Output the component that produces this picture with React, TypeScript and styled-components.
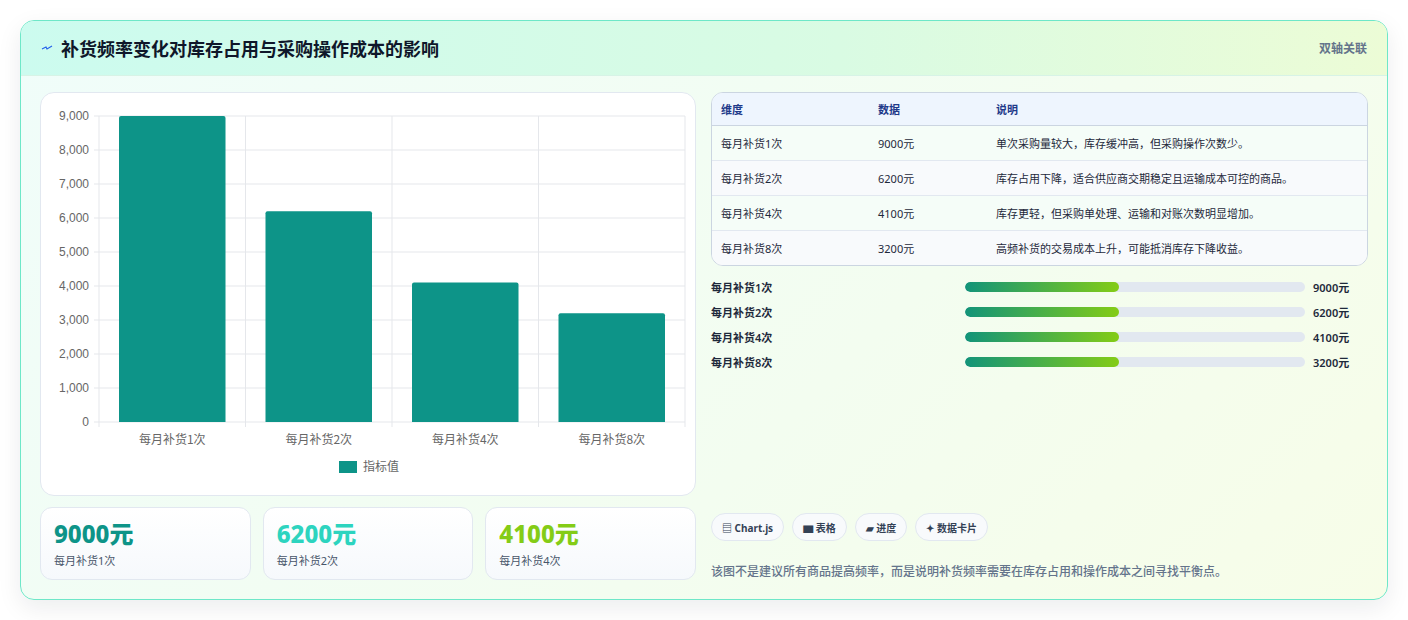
import React from "react";
import styled, { createGlobalStyle } from "styled-components";

const Global = createGlobalStyle`
  html, body { margin: 0; padding: 0; background: #fff; }
  body { font-family: "Noto Sans", "Noto Sans CJK SC", sans-serif; }
`;

const Page = styled.div`
  padding: 20px 20px 20px 20px;
  height: 620px;
  box-sizing: border-box;
`;

const Card = styled.div`
  width: 1368px;
  height: 580px;
  box-sizing: border-box;
  border: 1px solid #6ee7c8;
  border-radius: 14px;
  background: linear-gradient(135deg, #f0fdfa 0%, #f3fdf0 60%, #f7fde8 100%);
  box-shadow: 0 8px 24px rgba(15, 23, 42, 0.08);
  overflow: hidden;
  display: flex;
  flex-direction: column;
`;

const Header = styled.div`
  height: 55px;
  display: flex;
  align-items: center;
  justify-content: space-between;
  padding: 0 20px;
  background: linear-gradient(90deg, #ccfbef 0%, #d9fbe3 60%, #ecfcd6 100%);
  border-bottom: 1px solid #d7f3e6;
`;

const Title = styled.h1`
  margin: 0;
  font-size: 18px;
  font-weight: 700;
  color: #0f172a;
  display: flex;
  align-items: center;
  gap: 8px;
`;

const HeaderTag = styled.span`
  font-size: 12px;
  color: #64748b;
  font-weight: 600;
`;

const Body = styled.div`
  flex: 1;
  display: grid;
  grid-template-columns: 656px 657px;
  gap: 15px;
  padding: 16px 19px 19px 19px;
`;

const Col = styled.div`
  display: flex;
  flex-direction: column;
  gap: 11px;
`;

const Panel = styled.div`
  background: #fff;
  border: 1px solid #e2e8f0;
  border-radius: 14px;
  height: 404px;
  box-sizing: border-box;
`;

const Stats = styled.div`
  display: grid;
  grid-template-columns: repeat(3, 1fr);
  gap: 12px;
`;

const Stat = styled.div`
  height: 73px;
  box-sizing: border-box;
  border: 1px solid #e2e8f0;
  border-radius: 12px;
  background: linear-gradient(180deg, #ffffff, #f6f9fc);
  padding: 11px 13px;
`;

const StatValue = styled.div<{ $c: string }>`
  font-size: 24px;
  font-weight: 800;
  color: ${(p) => p.$c};
  line-height: 30px;
`;

const StatLabel = styled.div`
  font-size: 11px;
  color: #475569;
  margin-top: 3px;
`;

const TableWrap = styled.div`
  border: 1px solid #cbd5e1;
  border-radius: 12px;
  overflow: hidden;
  background: #fff;
`;

const Table = styled.table`
  width: 100%;
  border-collapse: collapse;
  font-size: 11px;
  color: #1e293b;
  th, td { text-align: left; padding: 0 9px; }
  th { height: 32px; background: #eef5fe; color: #1e3a8a; font-weight: 600; border-bottom: 1px solid #cbd5e1; }
  td { height: 34px; border-bottom: 1px solid #e2e8f0; }
  tr:last-child td { border-bottom: none; }
  tbody tr:nth-child(odd) td { background: #f5fdf8; }
  tbody tr:nth-child(even) td { background: #f8fafc; }
`;

const Bars = styled.div`
  display: flex;
  flex-direction: column;
  gap: 9px;
  margin-top: 2px;
`;

const BarRow = styled.div`
  display: grid;
  grid-template-columns: 246px 340px auto;
  align-items: center;
  gap: 8px;
  font-size: 11px;
  font-weight: 600;
  color: #1e293b;
  height: 16px;
`;

const Track = styled.div`
  height: 10px;
  background: #e2e8f0;
  border-radius: 5px;
  overflow: hidden;
`;

const Fill = styled.div`
  height: 100%;
  border-radius: 5px;
  background: linear-gradient(90deg, #129479, #84cc16);
`;

const Spacer = styled.div`
  flex: 1;
`;

const Tags = styled.div`
  display: flex;
  gap: 8px;
`;

const Tag = styled.span`
  height: 26px;
  padding: 0 10px;
  display: inline-flex;
  align-items: center;
  border: 1px solid #e2e8f0;
  border-radius: 14px;
  background: #f8fafc;
  font-size: 10px;
  font-weight: 700;
  color: #334155;
`;

const Note = styled.div`
  font-size: 12px;
  color: #64748b;
  font-weight: 500;
  margin-top: 10px;
`;

const rows = [
  ["每月补货1次", 9000, "单次采购量较大，库存缓冲高，但采购操作次数少。"],
  ["每月补货2次", 6200, "库存占用下降，适合供应商交期稳定且运输成本可控的商品。"],
  ["每月补货4次", 4100, "库存更轻，但采购单处理、运输和对账次数明显增加。"],
  ["每月补货8次", 3200, "高频补货的交易成本上升，可能抵消库存下降收益。"],
] as const;

function Chart() {
  const x0 = 58, x1 = 644, y0 = 329, yTop = 23;
  const h = y0 - yTop;
  const cw = (x1 - x0) / 4;
  const ticks = [0, 1000, 2000, 3000, 4000, 5000, 6000, 7000, 8000, 9000];
  return (
    <svg width="656" height="404" viewBox="0 0 656 404">
      {ticks.map((t) => {
        const y = y0 - (t / 9000) * h;
        return (
          <g key={t}>
            <line x1={x0 - 5} x2={x1} y1={y} y2={y} stroke="#e5e7eb" />
            <text x={x0 - 10} y={y + 4} textAnchor="end" fontSize="12" fill="#666" fontFamily="Liberation Sans, sans-serif">
              {t.toLocaleString("en-US")}
            </text>
          </g>
        );
      })}
      {[0, 1, 2, 3, 4].map((i) => (
        <line key={i} x1={x0 + i * cw} x2={x0 + i * cw} y1={yTop} y2={y0 + 5} stroke="#e5e7eb" />
      ))}
      {rows.map((r, i) => {
        const bh = ((r[1] as number) / 9000) * h;
        return (
          <g key={i}>
            <path
              d={`M${x0 + i * cw + 20} ${y0} V${y0 - bh + 2} q0 -2 2 -2 H${x0 + i * cw + cw - 22} q2 0 2 2 V${y0} Z`}
              fill="#0d9488"
            />
            <text x={x0 + i * cw + cw / 2} y={y0 + 22} textAnchor="middle" fontSize="12" fill="#666" fontFamily="Noto Sans CJK SC, sans-serif">
              {r[0]}
            </text>
          </g>
        );
      })}
      <rect x="298" y="368" width="18" height="12" fill="#0d9488" />
      <text x="322" y="378" fontSize="12" fill="#666" fontFamily="Noto Sans CJK SC, sans-serif">指标值</text>
    </svg>
  );
}

export default function App() {
  return (
    <Page>
      <Global />
      <Card>
        <Header>
          <Title>
            <svg width="12" height="10" viewBox="0 0 12 10">
              <path d="M1 6 L5 4 L6 6 L11 3" stroke="#2563eb" strokeWidth="1.2" fill="none" />
            </svg>
            补货频率变化对库存占用与采购操作成本的影响
          </Title>
          <HeaderTag>双轴关联</HeaderTag>
        </Header>
        <Body>
          <Col>
            <Panel>
              <Chart />
            </Panel>
            <Stats>
              <Stat>
                <StatValue $c="#0d9488">9000元</StatValue>
                <StatLabel>每月补货1次</StatLabel>
              </Stat>
              <Stat>
                <StatValue $c="#2dd4bf">6200元</StatValue>
                <StatLabel>每月补货2次</StatLabel>
              </Stat>
              <Stat>
                <StatValue $c="#84cc16">4100元</StatValue>
                <StatLabel>每月补货4次</StatLabel>
              </Stat>
            </Stats>
          </Col>
          <Col>
            <TableWrap>
              <Table>
                <colgroup>
                  <col style={{ width: 157 }} />
                  <col style={{ width: 118 }} />
                  <col />
                </colgroup>
                <thead>
                  <tr><th>维度</th><th>数据</th><th>说明</th></tr>
                </thead>
                <tbody>
                  {rows.map((r) => (
                    <tr key={r[0]}><td>{r[0]}</td><td>{r[1]}元</td><td>{r[2]}</td></tr>
                  ))}
                </tbody>
              </Table>
            </TableWrap>
            <Bars>
              {rows.map((r) => (
                <BarRow key={r[0]}>
                  <span>{r[0]}</span>
                  <Track><Fill style={{ width: "45.3%" }} /></Track>
                  <span>{r[1]}元</span>
                </BarRow>
              ))}
            </Bars>
            <Spacer />
            <Tags>
              <Tag>▤ Chart.js</Tag>
              <Tag>▆ 表格</Tag>
              <Tag>▰ 进度</Tag>
              <Tag>✦ 数据卡片</Tag>
            </Tags>
            <Note>该图不是建议所有商品提高频率，而是说明补货频率需要在库存占用和操作成本之间寻找平衡点。</Note>
          </Col>
        </Body>
      </Card>
    </Page>
  );
}
